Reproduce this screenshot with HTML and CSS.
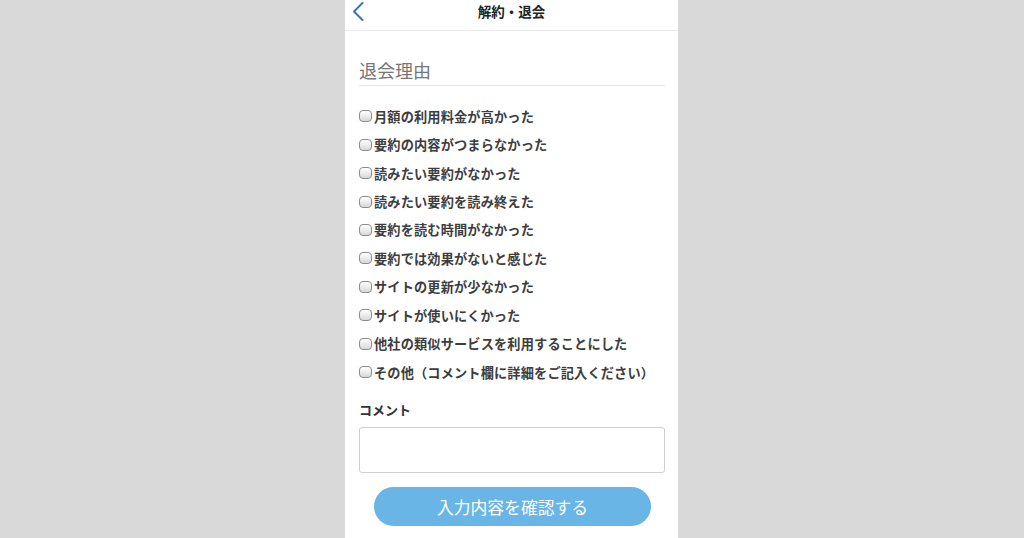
FILE: index.html
```html
<!DOCTYPE html>
<html lang="ja">
<head>
<meta charset="utf-8">
<title>解約・退会</title>
<link rel="stylesheet" href="styles.css">
</head>
<body>
<div class="phone">
  <header class="topbar">
    <svg class="back" width="14" height="20" viewBox="0 0 14 20"><path d="M11.5 2 L3 10.5 L11.5 19" fill="none" stroke="#3b74b3" stroke-width="2" stroke-linecap="round" stroke-linejoin="round"/></svg>
    <h1 class="title">解約・退会</h1>
  </header>
  <main class="content">
    <h2 class="section-title">退会理由</h2>
    <ul class="reasons">
      <li class="reason"><span class="box"></span>月額の利用料金が高かった</li>
      <li class="reason"><span class="box"></span>要約の内容がつまらなかった</li>
      <li class="reason"><span class="box"></span>読みたい要約がなかった</li>
      <li class="reason"><span class="box"></span>読みたい要約を読み終えた</li>
      <li class="reason"><span class="box"></span>要約を読む時間がなかった</li>
      <li class="reason"><span class="box"></span>要約では効果がないと感じた</li>
      <li class="reason"><span class="box"></span>サイトの更新が少なかった</li>
      <li class="reason"><span class="box"></span>サイトが使いにくかった</li>
      <li class="reason"><span class="box"></span>他社の類似サービスを利用することにした</li>
      <li class="reason"><span class="box"></span>その他（コメント欄に詳細をご記入ください）</li>
    </ul>
    <div class="label">コメント</div>
    <div class="comment"></div>
    <div class="btn-row"><button class="confirm">入力内容を確認する</button></div>
  </main>
</div>
</body>
</html>
```
FILE: styles.css
```css
html, body {
  margin: 0;
  padding: 0;
  background: #d9d9d9;
  font-family: "Noto Sans CJK JP", "Noto Sans", sans-serif;
}
.phone {
  width: 333px;
  height: 538px;
  margin-left: calc(50% - 167px);
  background: #fff;
  overflow: hidden;
}
.topbar {
  position: relative;
  height: 30px;
  border-bottom: 1px solid #ececec;
  display: flex;
  justify-content: center;
}
.back {
  position: absolute;
  left: 6px;
  top: 1px;
}
.title {
  margin: 0;
  font-size: 13.5px;
  line-height: 23px;
  font-weight: bold;
  color: #222;
}
.content {
  padding: 27px 13px 0 14px;
}
.section-title {
  margin: 0;
  font-size: 18px;
  line-height: 24px;
  font-weight: normal;
  color: #777;
  padding-bottom: 3px;
  border-bottom: 1px solid #e6e6e6;
}
.reasons {
  list-style: none;
  margin: 16px 0 0;
  padding: 0;
}
.reason {
  height: 28.45px;
  display: flex;
  align-items: center;
  font-size: 13.2px;
  letter-spacing: 0.15px;
  font-weight: bold;
  color: #3d3d3d;
  white-space: nowrap;
}
.box {
  width: 11px;
  height: 10px;
  border: 1.5px solid #8c8c8c;
  border-radius: 4px;
  background: linear-gradient(#ffffff, #d8d8d8);
  margin-right: 2px;
  flex: none;
}
.label {
  margin-top: 14px;
  font-size: 13px;
  line-height: 20px;
  font-weight: bold;
  color: #333;
}
.comment {
  margin-top: 7px;
  height: 44px;
  border: 1px solid #cfcfcf;
  border-radius: 3px;
}
.btn-row {
  display: flex;
  justify-content: center;
  margin-top: 14px;
  padding-left: 1px;
}
.confirm {
  width: 277px;
  height: 39px;
  border: none;
  border-radius: 20px;
  background: #69b5e5;
  color: #fff;
  font-family: "Noto Sans CJK JP", "Noto Sans", sans-serif;
  font-size: 16.8px;
  padding: 0;
}
```
